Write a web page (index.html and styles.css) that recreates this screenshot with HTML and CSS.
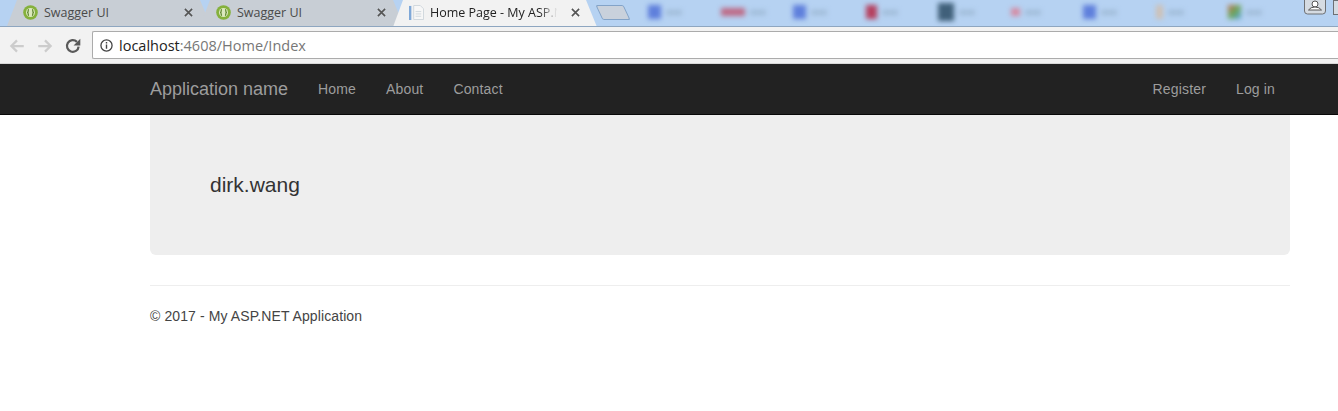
FILE: index.html
```html
<!DOCTYPE html>
<html lang="en">
<head>
<meta charset="utf-8">
<title>Home Page - My ASP.NET Application</title>
<link rel="stylesheet" href="styles.css">
</head>
<body>
<div class="browser">
  <div class="tabstrip">
    <div class="tab">
      <svg class="favicon" viewBox="0 0 14 14"><circle cx="7" cy="7" r="6.8" fill="#85b13c"/><circle cx="7" cy="7" r="4.200" fill="#dbe8bd"/><path d="M5.600 4.200Q4.600 4.400 4.800 5.600T4 7q1 .3.8 1.400t.8 1.400M8.400 4.200q1 .2.8 1.400T10 7q-1 .3-.8 1.400t-.8 1.400" fill="none" stroke="#4f7a1e" stroke-width="1"/></svg>
      <span class="tab-title">Swagger UI</span>
      <svg class="close" viewBox="0 0 10 10"><path d="M1 1l8 8M9 1l-8 8"/></svg>
    </div>
    <div class="tab">
      <svg class="favicon" viewBox="0 0 14 14"><circle cx="7" cy="7" r="6.8" fill="#85b13c"/><circle cx="7" cy="7" r="4.200" fill="#dbe8bd"/><path d="M5.600 4.200Q4.600 4.400 4.800 5.600T4 7q1 .3.8 1.400t.8 1.400M8.400 4.200q1 .2.8 1.400T10 7q-1 .3-.8 1.400t-.8 1.400" fill="none" stroke="#4f7a1e" stroke-width="1"/></svg>
      <span class="tab-title">Swagger UI</span>
      <svg class="close" viewBox="0 0 10 10"><path d="M1 1l8 8M9 1l-8 8"/></svg>
    </div>
    <div class="tab tab-active">
      <svg class="favicon" viewBox="0 0 16 16"><rect x="0" y="1" width="2.500" height="15" fill="#7fa8d8"/><path d="M5 .5h7l3.500 3.500v11.500H5z" fill="#f7f7f7" stroke="#cfd6dc"/><path d="M7 7h6M7 9.500h6M7 12h6" stroke="#d0d7dd"/></svg>
      <span class="tab-title tab-title-fade">Home Page - My ASP.N</span>
      <svg class="close" viewBox="0 0 10 10"><path d="M1 1l8 8M9 1l-8 8"/></svg>
    </div>
    <div class="newtab"></div>
    <div class="blurred">
      <span class="blur-item"><i class="chip chip-blue"></i><i class="txt"></i></span>
      <span class="blur-item"><i class="chip chip-red-wide"></i><i class="txt"></i></span>
      <span class="blur-item"><i class="chip chip-blue"></i><i class="txt"></i></span>
      <span class="blur-item"><i class="chip chip-crimson"></i><i class="txt"></i></span>
      <span class="blur-item"><i class="chip chip-dark"></i><i class="txt"></i></span>
      <span class="blur-item"><i class="chip chip-pink"></i><i class="txt"></i></span>
      <span class="blur-item"><i class="chip chip-blue"></i><i class="txt"></i></span>
      <span class="blur-item"><i class="chip chip-peach"></i><i class="txt"></i></span>
      <span class="blur-item"><i class="chip chip-multi"></i><i class="txt"></i></span>
    </div>
    <div class="profile">
      <svg viewBox="0 0 24 15"><path d="M1.500 0v11q0 3 3 3h15q3 0 3-3V0" fill="#d5dbe2" stroke="#6d7074"/><circle cx="12" cy="4" r="3" fill="#fff" stroke="#555"/><path d="M5.500 10q2-3 6.500-3t6.500 3z" fill="#fff" stroke="#555"/></svg>
    </div>
    <div class="profile-next"></div>
  </div>
  <div class="toolbar">
    <svg class="nav-icon" viewBox="0 0 16 16"><path d="M14 8H3M8 3 3 8l5 5" fill="none" stroke="#ccc" stroke-width="2"/></svg>
    <svg class="nav-icon" viewBox="0 0 16 16"><path d="M2 8h11M8 3l5 5-5 5" fill="none" stroke="#ccc" stroke-width="2"/></svg>
    <svg class="nav-icon" viewBox="0 0 16 16"><path d="M13 8.500A5.200 5.200 0 1 1 11.500 4.300" fill="none" stroke="#5a5a5a" stroke-width="2"/><path d="M14.500 1.500v6h-6z" fill="#5a5a5a"/></svg>
    <div class="omnibox">
      <svg class="info" viewBox="0 0 14 14"><circle cx="7" cy="7" r="6" fill="none" stroke="#444" stroke-width="1.400"/><path d="M7 6v4.500M7 3.300v1.500" stroke="#444" stroke-width="1.500"/></svg>
      <span class="url"><span class="url-host">localhost</span>:4608/Home/Index</span>
    </div>
  </div>
</div>
<nav class="navbar">
  <a class="brand" href="#">Application name</a>
  <ul class="nav-links">
    <li><a href="#">Home</a></li>
    <li><a href="#">About</a></li>
    <li><a href="#">Contact</a></li>
  </ul>
  <ul class="nav-links nav-right">
    <li><a href="#">Register</a></li>
    <li><a href="#">Log in</a></li>
  </ul>
</nav>
<main class="container">
  <section class="jumbotron">
    <p class="lead">dirk.wang</p>
  </section>
  <hr class="rule">
  <footer class="footer">© 2017 - My ASP.NET Application</footer>
</main>
</body>
</html>
```
FILE: styles.css
```css
* {
  box-sizing: border-box;
}

html,
body {
  margin: 0;
  padding: 0;
  background: #fff;
  overflow: hidden;
}

body {
  font-family: "Liberation Sans", Arial, sans-serif;
  font-size: 14px;
  color: #333;
}

.browser {
  height: 64px;
  background: #f2f2f2;
}

.tabstrip {
  height: 27px;
  display: flex;
  padding-left: 7px;
  background: #b6d2f2;
  border-bottom: 1px solid #8ea6c0;
  overflow: hidden;
}

.tab {
  flex: none;
  width: 204px;
  height: 26px;
  margin-right: -11px;
  padding: 0 18px 1px 16px;
  display: flex;
  align-items: center;
  background: #c8ced5;
  clip-path: polygon(0 100%, 10px 0, 193px 0, 100% 100%);
  font-family: "Open Sans", sans-serif;
  font-size: 12.500px;
  color: #4a4a4a;
}

.tab-active {
  height: 27px;
  padding-right: 17px;
  padding-bottom: 2px;
  background: #f2f2f2;
  color: #222;
  position: relative;
  z-index: 1;
}

.favicon {
  flex: none;
  width: 15px;
  height: 15px;
  margin-right: 6px;
}

.tab-title {
  flex: 1;
  white-space: nowrap;
}

.tab-title-fade {
  margin-right: 4px;
  -webkit-mask-image: linear-gradient(90deg, #000 80%, transparent 93%);
  mask-image: linear-gradient(90deg, #000 80%, transparent 93%);
}

.close {
  flex: none;
  width: 9px;
  height: 9px;
  fill: none;
  stroke: #555;
  stroke-width: 1.800;
}

.newtab {
  flex: none;
  width: 28px;
  height: 15px;
  margin: 5px 0 0 13px;
  background: #c9d1dc;
  border: 1px solid #83a3c8;
  border-radius: 2px;
  transform: skewX(25deg);
}

.blurred {
  flex: none;
  width: 648px;
  height: 26px;
  display: flex;
  padding-left: 21px;
  filter: blur(2.500px);
}

.blur-item {
  flex: none;
  width: 72.500px;
  height: 24px;
  display: flex;
  align-items: center;
  gap: 5px;
}

.chip {
  flex: none;
  display: block;
  height: 14px;
  width: 13px;
}

.chip-blue {
  background: #5f7fdc;
}

.chip-red-wide {
  width: 24px;
  height: 8px;
  background: #bd6a86;
}

.chip-crimson {
  width: 11px;
  background: #b5405f;
}

.chip-dark {
  width: 16px;
  height: 18px;
  background: #40607a;
}

.chip-pink {
  width: 9px;
  height: 8px;
  background: #d68aa2;
}

.chip-peach {
  width: 7px;
  background: #cfc0b4;
}

.chip-multi {
  background: linear-gradient(135deg, #c96a4a 0%, #6aa85a 50%, #58a0e0 100%);
}

.txt {
  display: block;
  width: 16px;
  height: 5px;
  background: #a0bcd8;
}

.profile {
  flex: none;
  width: 24px;
  height: 15px;
  margin-left: auto;
}

.profile svg {
  display: block;
  width: 24px;
  height: 15px;
}

.profile-next {
  flex: none;
  width: 5px;
  height: 15px;
  margin-left: 6px;
  background: #d5dbe2;
  border: 1px solid #6d7074;
  border-right: 0;
}

.toolbar {
  height: 37px;
  padding: 4px 0 4px 8px;
  display: flex;
  align-items: flex-start;
  gap: 10px;
  background: #f2f2f2;
  border-bottom: 1px solid #d8d8d8;
}

.nav-icon {
  flex: none;
  width: 18px;
  height: 18px;
  margin-top: 6px;
}

.omnibox {
  flex: 1;
  height: 28px;
  padding-left: 7px;
  display: flex;
  align-items: center;
  gap: 6px;
  background: #fff;
  border: 1px solid #ababab;
  border-right: 0;
  border-radius: 2px 0 0 2px;
  font-family: "Open Sans", sans-serif;
  font-size: 14.500px;
  color: #777;
}

.info {
  flex: none;
  width: 13px;
  height: 13px;
}

.url-host {
  color: #222;
}

.navbar {
  height: 51px;
  padding: 0 48px 0 150px;
  display: flex;
  align-items: center;
  background: #222;
  border-bottom: 1px solid #080808;
}

.navbar a {
  color: #9d9d9d;
  text-decoration: none;
}

.brand {
  font-size: 18px;
  margin-right: 15px;
}

.nav-links {
  list-style: none;
  margin: 0;
  padding: 0;
  display: flex;
  letter-spacing: .15px;
}

.nav-links a {
  display: block;
  padding: 0 15px;
}

.nav-right {
  margin-left: auto;
}

.container {
  width: 1140px;
  margin-left: 150px;
}

.jumbotron {
  height: 140px;
  padding: 0 60px;
  display: flex;
  align-items: center;
  background: #eee;
  border-radius: 0 0 6px 6px;
}

.lead {
  margin: 0;
  font-size: 21px;
  color: #333;
}

.rule {
  margin: 30px 0 20px;
  border: 0;
  border-top: 1px solid #eee;
}

.footer {
  line-height: 20px;
  letter-spacing: .1px;
  color: #444;
}
```
